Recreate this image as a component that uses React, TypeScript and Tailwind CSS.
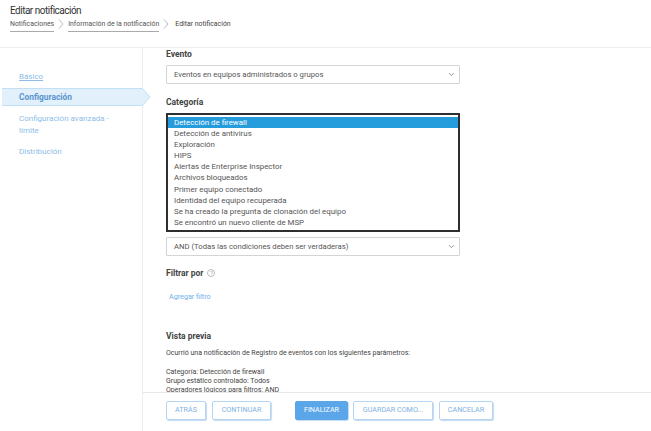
import React from 'react';
import { ChevronDown } from 'lucide-react';

const categories = [
  'Detección de firewall',
  'Detección de antivirus',
  'Exploración',
  'HIPS',
  'Alertas de Enterprise Inspector',
  'Archivos bloqueados',
  'Primer equipo conectado',
  'Identidad del equipo recuperada',
  'Se ha creado la pregunta de clonación del equipo',
  'Se encontró un nuevo cliente de MSP',
];

const SelectBox = ({ value }: { value: string }) => (
  <div className="flex items-center justify-between h-[19px] w-[294px] border border-[#d4d4d4] rounded-[1px] pl-[7px] pr-[3px] text-[7.7px] text-[#555]">
    <span>{value}</span>
    <ChevronDown className="w-[9px] h-[9px] text-[#777]" />
  </div>
);

const Button = ({ label, width, primary }: { label: string; width: string; primary?: boolean }) => (
  <button
    className={`${width} h-[19px] rounded-[2px] border text-[7.2px] shadow-[1px_1px_1px_#c4daee] ${
      primary ? 'bg-[#5aa6e8] border-[#5aa6e8] text-white' : 'bg-white border-[#b5d6f3] text-[#7fb2e2]'
    }`}
  >
    {label}
  </button>
);

const Crumb = () => (
  <svg className="w-[6px] h-[10px] mx-[4px] mb-[3px]" viewBox="0 0 6 10">
    <path d="M1 0.5 L5 5 L1 9.5" fill="none" stroke="#aaa" strokeWidth="0.8" />
  </svg>
);

export default function App() {
  return (
    <div className="w-[651px] h-[431px] bg-white overflow-hidden flex flex-col font-['Roboto',sans-serif]">
      <header className="h-[48px] shrink-0 border-b border-[#efefef] pl-[10px] pt-[4px]">
        <h1 className="text-[10px] tracking-[-0.5px] leading-[14px] text-[#333]">Editar notificación</h1>
        <div className="flex items-center mt-[1px] text-[6.9px] leading-[10px] text-[#555]">
          <span className="border-b border-[#aaa] pb-[2px]">Notificaciones</span>
          <Crumb />
          <span className="border-b border-[#aaa] pb-[2px]">Información de la notificación</span>
          <Crumb />
          <span className="pb-[3px] pl-[2px] text-[#444]">Editar notificación</span>
        </div>
      </header>

      <div className="flex flex-1 min-h-0">
        <aside className="w-[143px] shrink-0 border-r border-[#ececec] pl-[2px] pt-[23px] text-[8px] text-[#8dbde8]">
          <div className="pl-[17px] h-[17px] underline">Básico</div>
          <div className="relative h-[18px] flex items-center pl-[17px] bg-[#e2f0fb] border-y border-[#c0e0f6] font-bold text-[8.4px] text-[#5b95cf]">
            Configuración
            <svg className="absolute left-[140px] top-[-1px] w-[9px] h-[18px]" viewBox="0 0 9 18">
              <path d="M0 0 L8 9 L0 18 Z" fill="#e2f0fb" />
              <path d="M0 0 L8 9 L0 18" fill="none" stroke="#c0e0f6" />
            </svg>
          </div>
          <div className="pl-[17px] mt-[7px] leading-[12px] w-[120px]">Configuración avanzada - límite</div>
          <div className="pl-[17px] mt-[9px]">Distribución</div>
        </aside>

        <main className="flex-1 min-w-0 flex flex-col">
          <div className="flex-1 min-h-0 overflow-hidden pl-[23px]">
            <div className="text-[8.5px] font-bold text-[#444] leading-[12px]">Evento</div>
            <div className="mt-[5px]">
              <SelectBox value="Eventos en equipos administrados o grupos" />
            </div>
            <div className="mt-[12px] text-[8.5px] font-bold text-[#444] leading-[12px]">Categoría</div>
            <ul className="mt-[5px] w-[294px] h-[119px] border-2 border-[#2f2f2f] pt-[2px] text-[7.9px] text-[#555]">
              {categories.map((c, i) => (
                <li
                  key={c}
                  className={`h-[11.1px] leading-[11px] pl-[6px] ${i === 0 ? 'bg-[#259cdc] text-white' : ''}`}
                >
                  {c}
                </li>
              ))}
            </ul>
            <div className="mt-[5px]">
              <SelectBox value="AND (Todas las condiciones deben ser verdaderas)" />
            </div>
            <div className="mt-[11px] flex items-center gap-[4px] text-[8.5px] font-bold text-[#444] leading-[12px]">
              Filtrar por
              <span className="w-[8px] h-[8px] rounded-full border border-[#bbb] text-[5.5px] leading-[7px] text-center font-normal text-[#999]">
                ?
              </span>
            </div>
            <div className="mt-[13px] pl-[3px] text-[7.2px] text-[#6fb0ea] leading-[10px]">Agregar filtro</div>
            <div className="mt-[28px] text-[8.5px] font-bold text-[#444] leading-[12px]">Vista previa</div>
            <div className="mt-[7px] text-[7px] text-[#444] leading-[9px]">
              Ocurrió una notificación de Registro de eventos con los siguientes parámetros:
            </div>
            <div className="mt-[10px] text-[7px] text-[#444] leading-[9.2px]">
              <div>Categoría: Detección de firewall</div>
              <div>Grupo estático controlado: Todos</div>
              <div>Operadores lógicos para filtros: AND</div>
            </div>
          </div>
          <footer className="h-[39px] shrink-0 border-t border-[#e8e8e8] bg-white pl-[23px] pt-[8px] flex items-start">
            <Button label="ATRÁS" width="w-[40px]" />
            <Button label="CONTINUAR" width="w-[59px] ml-[6px]" />
            <Button label="FINALIZAR" width="w-[53px] ml-[24px]" primary />
            <Button label="GUARDAR COMO..." width="w-[80px] ml-[5px]" />
            <Button label="CANCELAR" width="w-[54px] ml-[6px]" />
          </footer>
        </main>
      </div>
    </div>
  );
}
